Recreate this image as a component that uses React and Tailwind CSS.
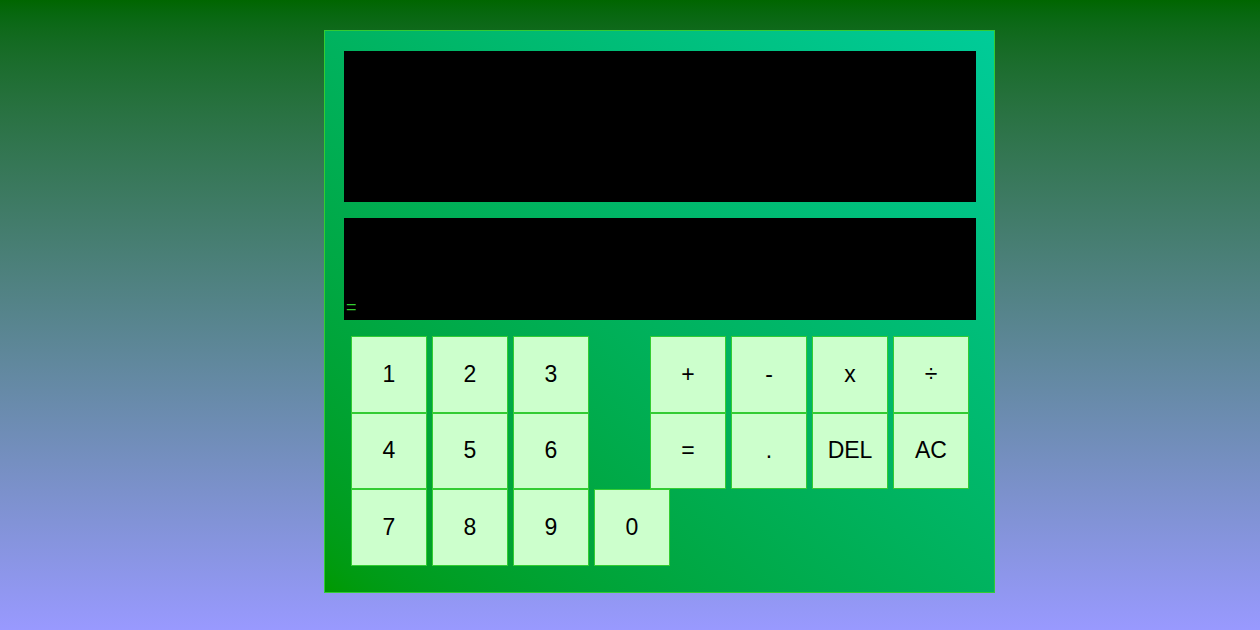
import React from "react";

const rows = [
  { nums: ["1", "2", "3"], ops: ["+", "-", "x", "÷"] },
  { nums: ["4", "5", "6"], ops: ["=", ".", "DEL", "AC"] },
  { nums: ["7", "8", "9", "0"], ops: [] },
];

function Key({ label }) {
  return (
    <button className="w-[76px] h-[76.5px] bg-[#ccffcc] border border-[#33cc33] text-[23px] text-black leading-none font-['Liberation_Sans',Arial,sans-serif]">
      {label}
    </button>
  );
}

function App() {
  return (
    <div className="min-h-screen w-full bg-linear-to-b from-[#006600] to-[#9999ff] pt-[30px] pb-[38px]">
      <div className="ml-[324px] w-[671px] h-[563px] border border-[#33cc33] bg-linear-to-tr from-[#009900] to-[#00cc99] pt-[20px] pl-[19px] pr-[18px]">
        <div className="h-[151px] bg-black" />
        <div className="mt-[16px] h-[102px] bg-black flex items-end pl-[2px] pb-[4px]">
          <span className="text-[18px] leading-none text-[#33cc33] font-['Liberation_Sans',Arial,sans-serif]">=</span>
        </div>
        <div className="mt-[16px] flex flex-col pl-[7px] pr-[7px]">
          {rows.map((row, i) => (
            <div key={i} className="flex justify-between">
              <div className="flex gap-[5px]">
                {row.nums.map((k) => (
                  <Key key={k} label={k} />
                ))}
              </div>
              <div className="flex gap-[5px]">
                {row.ops.map((k) => (
                  <Key key={k} label={k} />
                ))}
              </div>
            </div>
          ))}
        </div>
      </div>
    </div>
  );
}

export default App;
